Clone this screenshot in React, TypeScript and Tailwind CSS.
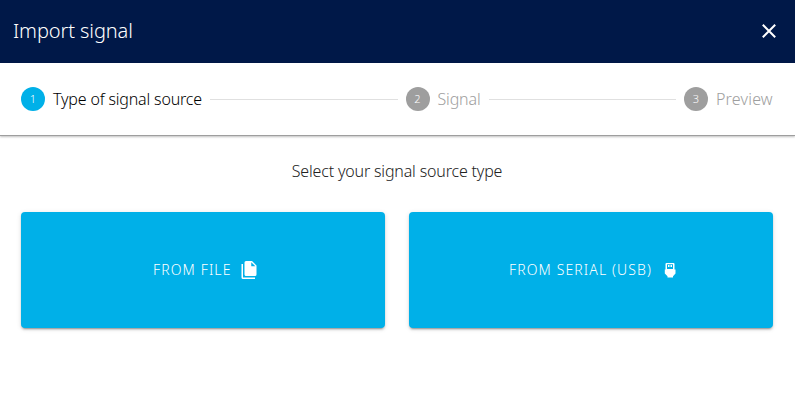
import React from 'react';

function Step({ n, label, active, textClass }: { n: number; label: string; active?: boolean; textClass: string }) {
  return (
    <div className="flex shrink-0 items-center gap-2">
      <span className={`flex size-6 items-center justify-center rounded-full text-[11px] font-light text-white ${active ? 'bg-[#00b0e8]' : 'bg-[#9e9e9e]'}`}>{n}</span>
      <span className={`whitespace-nowrap text-base ${active ? 'text-black' : 'text-[#9e9e9e]'} ${textClass}`}>{label}</span>
    </div>
  );
}

function Line() {
  return <hr className="mx-2 h-px grow border-0 bg-[#e0e0e0]" />;
}

function FilesIcon() {
  return (
    <svg viewBox="0 0 24 24" className="size-[18px]" fill="currentColor">
      <path d="M15,7H20.5L15,1.5V7M8,0H16L22,6V18A2,2 0 0,1 20,20H8C6.89,20 6,19.1 6,18V2A2,2 0 0,1 8,0M4,4V22H20V24H4A2,2 0 0,1 2,22V4H4Z" />
    </svg>
  );
}

function UsbIcon() {
  return (
    <svg viewBox="0 0 12 16" className="h-4 w-3" fill="currentColor" fillRule="evenodd">
      <path d="M1.5 2Q1.5 1 2.5 1H9.5Q10.5 1 10.5 2V7.5H11.5V11.5L9 14.2V15.5H3.5V14.2L.8 11.5V7.5H1.5ZM3 2.2V7H9V2.2ZM4 3H5.5V5H4ZM6.5 3H8V5H6.5Z" />
    </svg>
  );
}

export default function App() {
  return (
    <div className="flex h-[417px] w-[795px] flex-col overflow-hidden bg-white font-['Noto_Sans','Open_Sans',sans-serif] font-light">
      <header className="flex h-[63px] shrink-0 items-center justify-between bg-[#001848] pr-[19px] pb-0.5 pl-[13px] text-white">
        <h1 className="text-xl font-light tracking-[-0.1px] whitespace-nowrap">Import signal</h1>
        <svg viewBox="0 0 14 14" className="size-[14px]" stroke="currentColor" strokeWidth="2">
          <path d="M.8 .8L13.2 13.2M13.2 .8L.8 13.2" />
        </svg>
      </header>
      <nav className="flex h-[73px] shrink-0 items-center border-b border-[#9e9e9e] pr-[22px] pl-[21px] shadow-[0_1px_2px_rgba(0,0,0,0.25)]">
        <Step n={1} label="Type of signal source" active textClass="w-[149px] tracking-[-0.17px]" />
        <Line />
        <Step n={2} label="Signal" textClass="w-[43px] tracking-[-0.15px]" />
        <Line />
        <Step n={3} label="Preview" textClass="w-[57px] tracking-[0.2px]" />
      </nav>
      <main className="flex flex-col items-center pt-[23px]">
        <p className="h-[53px] pr-px text-base leading-6 tracking-[-0.17px] whitespace-nowrap text-[#212121]">Select your signal source type</p>
        <div className="flex gap-6 self-start pl-[21px] text-sm text-white">
          <button className="flex h-[116px] w-[364px] items-center rounded bg-[#00b0e8] pl-[132px] shadow-[0_3px_1px_-2px_rgba(0,0,0,0.2),0_2px_2px_0_rgba(0,0,0,0.14),0_1px_5px_0_rgba(0,0,0,0.12)]">
            <span className="w-[87px] text-left tracking-[1.12px] whitespace-nowrap">FROM FILE</span>
            <FilesIcon />
          </button>
          <button className="flex h-[116px] w-[364px] items-center rounded bg-[#00b0e8] pl-[100px] shadow-[0_3px_1px_-2px_rgba(0,0,0,0.2),0_2px_2px_0_rgba(0,0,0,0.14),0_1px_5px_0_rgba(0,0,0,0.12)]">
            <span className="w-[155px] text-left tracking-[1.12px] whitespace-nowrap">FROM SERIAL (USB)</span>
            <UsbIcon />
          </button>
        </div>
      </main>
    </div>
  );
}
